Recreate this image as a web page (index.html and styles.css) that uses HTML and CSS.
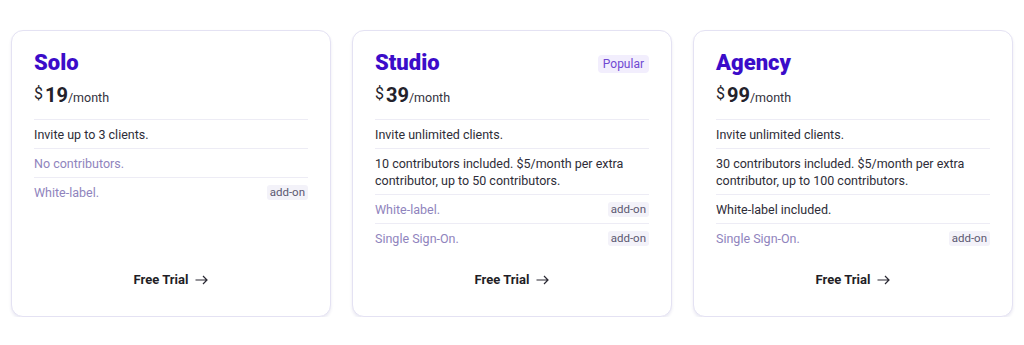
FILE: index.html
```html
<!DOCTYPE html>
<html lang="en">
<head>
<meta charset="utf-8">
<link rel="stylesheet" href="styles.css">
</head>
<body>
<div class="plans">
  <div class="card">
    <div class="head">
      <h2 class="name">Solo</h2>
    </div>
    <div class="price"><span class="cur">$</span><span class="amt">19</span><span class="per">/month</span></div>
    <ul class="features">
      <li>Invite up to 3 clients.</li>
      <li class="muted">No contributors.</li>
      <li class="muted"><span>White-label.</span><span class="addon">add-on</span></li>
    </ul>
    <div class="cta">Free Trial <svg class="arrow" width="13" height="10" viewBox="0 0 13 10"><path d="M0.5 5H12M8 1L12 5L8 9" fill="none" stroke="#2a2933" stroke-width="1.2"/></svg></div>
  </div>
  <div class="card">
    <div class="head">
      <h2 class="name">Studio</h2>
      <span class="badge">Popular</span>
    </div>
    <div class="price"><span class="cur">$</span><span class="amt">39</span><span class="per">/month</span></div>
    <ul class="features">
      <li>Invite unlimited clients.</li>
      <li>10 contributors included. $5/month per extra contributor, up to 50 contributors.</li>
      <li class="muted"><span>White-label.</span><span class="addon">add-on</span></li>
      <li class="muted"><span>Single Sign-On.</span><span class="addon">add-on</span></li>
    </ul>
    <div class="cta">Free Trial <svg class="arrow" width="13" height="10" viewBox="0 0 13 10"><path d="M0.5 5H12M8 1L12 5L8 9" fill="none" stroke="#2a2933" stroke-width="1.2"/></svg></div>
  </div>
  <div class="card">
    <div class="head">
      <h2 class="name">Agency</h2>
    </div>
    <div class="price"><span class="cur">$</span><span class="amt">99</span><span class="per">/month</span></div>
    <ul class="features">
      <li>Invite unlimited clients.</li>
      <li>30 contributors included. $5/month per extra contributor, up to 100 contributors.</li>
      <li>White-label included.</li>
      <li class="muted"><span>Single Sign-On.</span><span class="addon">add-on</span></li>
    </ul>
    <div class="cta">Free Trial <svg class="arrow" width="13" height="10" viewBox="0 0 13 10"><path d="M0.5 5H12M8 1L12 5L8 9" fill="none" stroke="#2a2933" stroke-width="1.2"/></svg></div>
  </div>
</div>
</body>
</html>
```
FILE: styles.css
```css
* { box-sizing: border-box; }
html, body { margin: 0; background: #fff; }
body {
  font-family: Roboto, "Liberation Sans", sans-serif;
  color: #23222b;
}
.plans {
  display: grid;
  grid-template-columns: repeat(3, 320px);
  gap: 21px;
  padding: 30px 11px 0;
}
.card {
  height: 287px;
  display: flex;
  flex-direction: column;
  border: 1px solid #e4e2f3;
  border-radius: 12px;
  padding: 19px 22px 0;
  background: #fff;
  box-shadow: 0 2px 3px rgba(60, 50, 140, 0.10);
}
.head {
  display: flex;
  justify-content: space-between;
  align-items: center;
}
.name {
  margin: 0;
  font-size: 22px;
  line-height: 26px;
  font-weight: 900;
  color: #3b0cc9;
}
.badge {
  font-size: 12px;
  font-weight: 400;
  color: #7049d2;
  background: #f2eefd;
  border-radius: 4px;
  padding: 2px 5px;
  line-height: 14px;
  margin-top: 2px;
}
.price {
  margin-top: 7px;
  display: flex;
  align-items: baseline;
  height: 26px;
}
.cur { font-size: 16px; margin-right: 2px; position: relative; top: -3px; }
.amt { font-size: 20px; font-weight: 700; }
.per { font-size: 12.5px; color: #33323d; }
.features {
  list-style: none;
  margin: 10px 0 0;
  padding: 0;
  border-top: 1px solid #edecf5;
}
.features li {
  display: flex;
  justify-content: space-between;
  align-items: center;
  font-size: 12.5px;
  line-height: 17px;
  padding: 6px 0 5px;
  border-bottom: 1px solid #edecf5;
  color: #2e2d38;
}
.features li:last-child { border-bottom: none; }
.features li.muted { color: #8f84bd; }
.addon {
  font-size: 11.5px;
  line-height: 15px;
  color: #5b5870;
  background: #f3f2f9;
  border-radius: 3px;
  padding: 0 3px;
}
.cta {
  margin-top: auto;
  margin-bottom: 28px;
  display: flex;
  justify-content: center;
  align-items: center;
  gap: 7px;
  font-size: 13px;
  font-weight: 700;
  color: #1f1e27;
  line-height: 16px;
}
.arrow { display: block; }
```
